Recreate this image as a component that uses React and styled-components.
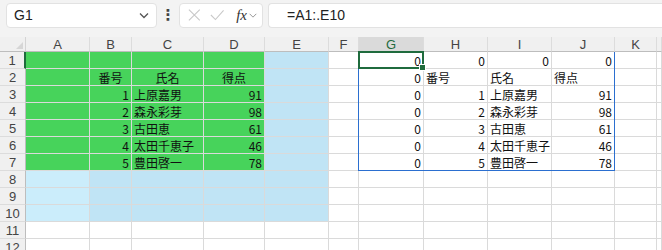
import React from 'react';
import styled, { createGlobalStyle } from 'styled-components';

const GlobalStyle = createGlobalStyle`
  body {
    margin: 0;
    background: #f3f3f3;
    font-family: "Noto Sans", "Noto Sans CJK JP", sans-serif;
  }
`;

const Page = styled.div`
  width: 662px;
  height: 250px;
  overflow: hidden;
  background: #f3f3f3;
`;

const Toolbar = styled.div`
  display: flex;
  align-items: center;
  height: 30px;
  padding: 0 0 0 6px;
  box-sizing: border-box;
`;

const NameBox = styled.div`
  display: flex;
  align-items: center;
  justify-content: space-between;
  width: 151px;
  height: 25px;
  box-sizing: border-box;
  padding: 0 6px 0 7px;
  background: #fff;
  border: 1px solid #e2e2e2;
  border-radius: 4px;
  font: 14px "Liberation Sans", "Noto Sans", sans-serif;
  color: #222;
`;

const Dots = styled.div`
  width: 22px;
  display: flex;
  justify-content: center;
  font: bold 15px "DejaVu Sans", sans-serif;
  color: #444;
`;

const FxBox = styled.div`
  display: flex;
  align-items: center;
  gap: 9px;
  width: 84px;
  height: 25px;
  box-sizing: border-box;
  padding: 0 4px 0 8px;
  background: #fff;
  border: 1px solid #e2e2e2;
  border-radius: 4px;
`;

const Fx = styled.span`
  font: italic 15px "Liberation Serif", serif;
  color: #333;
  margin-left: 3px;
`;

const FormulaBox = styled.div`
  flex: 1;
  margin-left: 5px;
  height: 25px;
  box-sizing: border-box;
  display: flex;
  align-items: center;
  padding-left: 18px;
  background: #fff;
  border: 1px solid #e2e2e2;
  border-right: none;
  border-radius: 4px 0 0 4px;
  font: 14px "Liberation Sans", "Noto Sans", sans-serif;
  color: #222;
`;

const Strip = styled.div`
  height: 7px;
`;

const Sheet = styled.div`
  display: grid;
  grid-template-columns: 26px 64px 42px 72px 61px 64px 30px 65px 64px 64px 63px 1fr;
  grid-template-rows: 15px repeat(12, 17px);
  background: #fff;
`;

const Corner = styled.div`
  grid-row: 1;
  grid-column: 1;
  background: #f0f0f0;
  border-right: 1px solid #d4d4d4;
  border-bottom: 1px solid #bdbdbd;
  position: relative;
  &::after {
    content: '';
    position: absolute;
    right: 2px;
    bottom: 2px;
    border-left: 7px solid transparent;
    border-bottom: 7px solid #d6d6d6;
  }
`;

const ColHead = styled.div`
  grid-row: 1;
  grid-column: ${p => p.$col};
  display: flex;
  align-items: center;
  justify-content: center;
  background: ${p => (p.$active ? '#dadada' : '#f0f0f0')};
  border-right: 1px solid #dcdcdc;
  border-bottom: 1px solid #bdbdbd;
  font: 13px "Liberation Sans", "Noto Sans", sans-serif;
  color: ${p => (p.$active ? '#1f6b3d' : '#444')};
`;

const RowHead = styled.div`
  grid-column: 1;
  grid-row: ${p => p.$row};
  display: flex;
  align-items: center;
  justify-content: center;
  background: #f0f0f0;
  border-bottom: 1px solid #dcdcdc;
  border-right: ${p => (p.$active ? '2px solid #1f6b3d' : '1px solid #bdbdbd')};
  font: 13px "Liberation Sans", "Noto Sans", sans-serif;
  color: #444;
`;

const Cell = styled.div`
  grid-row: ${p => p.$row};
  grid-column: ${p => p.$col};
  background: ${p => p.$bg};
  border-right: 1px solid #dadada;
  border-bottom: 1px solid #dadada;
  padding: 0 2px;
  overflow: hidden;
  white-space: nowrap;
  text-align: ${p => p.$align};
  font: 12px/17px "Noto Sans CJK JP", sans-serif;
  color: #111;
`;

const Spill = styled.div`
  grid-row: 2 / 9;
  grid-column: 8 / 12;
  margin-left: -1px;
  border: 1px solid #2b6fd0;
  border-top: none;
  pointer-events: none;
  z-index: 1;
`;

const Selection = styled.div`
  grid-row: 2;
  grid-column: 8;
  margin: -1px 0 0 -1px;
  border: 2px solid #1f6b3d;
  position: relative;
  z-index: 2;
  &::after {
    content: '';
    position: absolute;
    right: -4px;
    bottom: -4px;
    width: 5px;
    height: 5px;
    background: #1f6b3d;
    border: 1px solid #fff;
  }
`;

const COLS = ['A', 'B', 'C', 'D', 'E', 'F', 'G', 'H', 'I', 'J', 'K'];

const names = ['上原嘉男', '森永彩芽', '古田恵', '太田千恵子', '豊田啓一'];
const scores = [91, 98, 61, 46, 78];

const GREEN = '#47d35b';
const BLUE = '#c0e4f5';
const PALE = '#cbedfb';

function fillFor(r, c) {
  if (r <= 7 && c <= 3) return GREEN;
  if (r <= 7 && c === 4) return BLUE;
  if (r >= 8 && r <= 10 && c === 0) return PALE;
  if (r >= 8 && r <= 10 && c <= 4) return BLUE;
  return '#fff';
}

function valueFor(r, c) {
  // left table
  if (r === 2) {
    if (c === 1) return ['番号', 'center'];
    if (c === 2) return ['氏名', 'center'];
    if (c === 3) return ['得点', 'center'];
  }
  if (r >= 3 && r <= 7) {
    const i = r - 3;
    if (c === 1) return [String(i + 1), 'right'];
    if (c === 2) return [names[i], 'left'];
    if (c === 3) return [String(scores[i]), 'right'];
  }
  // spilled copy
  if (c >= 6 && c <= 9 && r <= 7) {
    if (r === 1) return ['0', 'right'];
    if (c === 6) return ['0', 'right'];
    if (r === 2) return [['番号', '氏名', '得点'][c - 7], 'left'];
    const i = r - 3;
    if (c === 7) return [String(i + 1), 'right'];
    if (c === 8) return [names[i], 'left'];
    if (c === 9) return [String(scores[i]), 'right'];
  }
  return ['', 'left'];
}

const Chevron = () => (
  <svg width="12" height="12" viewBox="0 0 12 12">
    <path d="M2 4.5 L6 8.5 L10 4.5" fill="none" stroke="#555" strokeWidth="1.3" />
  </svg>
);

export default function App() {
  const rows = Array.from({ length: 12 }, (_, i) => i + 1);
  return (
    <Page>
      <GlobalStyle />
      <Toolbar>
        <NameBox>
          G1
          <Chevron />
        </NameBox>
        <Dots>⋮</Dots>
        <FxBox>
          <svg width="14" height="14" viewBox="0 0 14 14">
            <path d="M1 1 L13 13 M13 1 L1 13" stroke="#c8c8c8" strokeWidth="1.2" />
          </svg>
          <svg width="16" height="14" viewBox="0 0 16 14">
            <path d="M1 7 L6 12 L15 2" fill="none" stroke="#c8c8c8" strokeWidth="1.2" />
          </svg>
          <Fx>fx</Fx>
          <svg width="11" height="11" viewBox="0 0 12 12" style={{ marginLeft: -8 }}>
            <path d="M2 4 L6 8 L10 4" fill="none" stroke="#999" strokeWidth="1.2" />
          </svg>
        </FxBox>
        <FormulaBox>=A1:.E10</FormulaBox>
      </Toolbar>
      <Strip />
      <Sheet>
        <Corner />
        {COLS.map((l, i) => (
          <ColHead key={l} $col={i + 2} $active={l === 'G'}>{l}</ColHead>
        ))}
        <ColHead $col={13} />
        {rows.map(r => (
          <React.Fragment key={r}>
            <RowHead $row={r + 1} $active={r === 1}>{r}</RowHead>
            {COLS.map((l, c) => {
              const [text, align] = valueFor(r, c);
              return (
                <Cell key={l} $row={r + 1} $col={c + 2} $bg={fillFor(r, c)} $align={align}>
                  {text}
                </Cell>
              );
            })}
            <Cell $row={r + 1} $col={13} $bg="#fff" $align="left" />
          </React.Fragment>
        ))}
        <Spill />
        <Selection />
      </Sheet>
    </Page>
  );
}
